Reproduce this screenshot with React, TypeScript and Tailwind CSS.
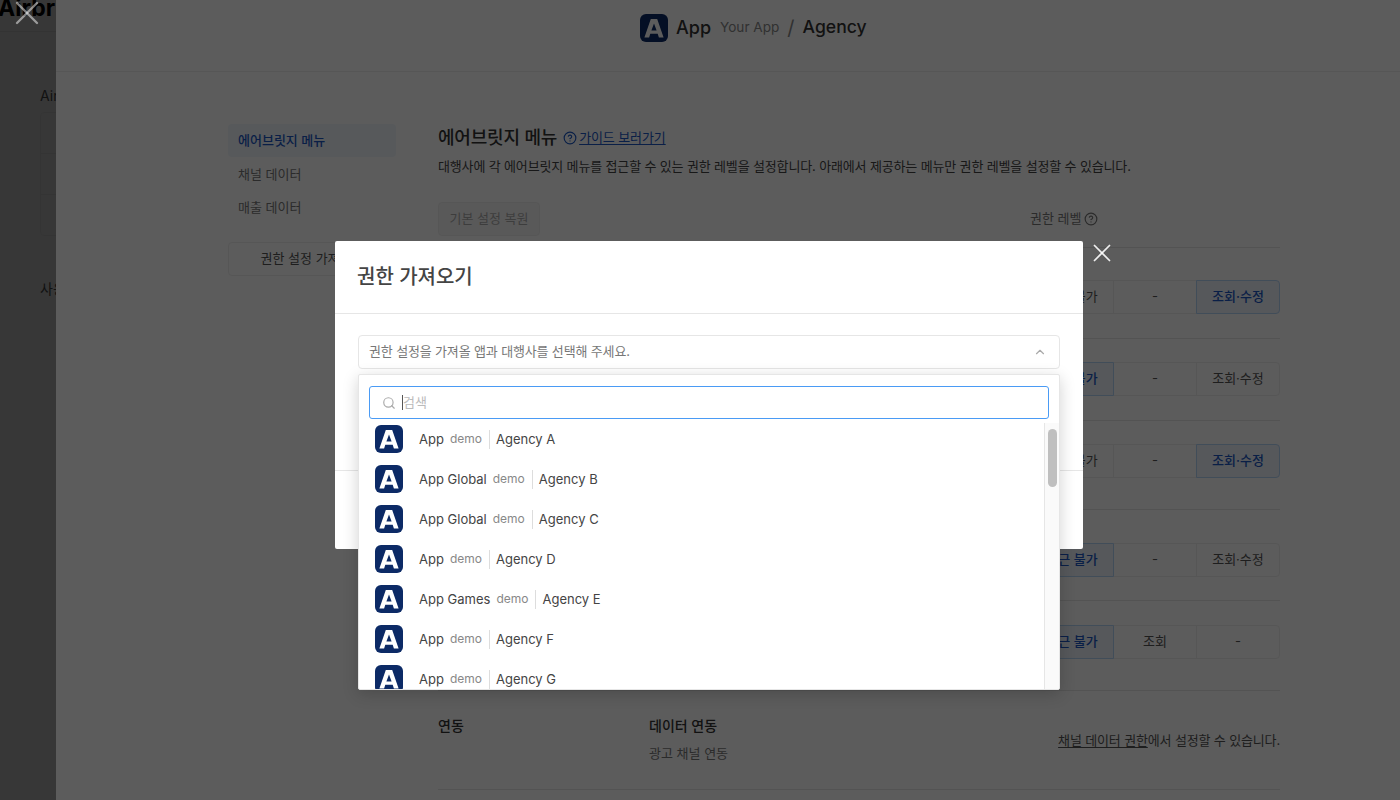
import { ChevronUp, CircleHelp, Search, X } from "lucide-react";

const apps = [
  { app: "App", agency: "Agency A" },
  { app: "App Global", agency: "Agency B" },
  { app: "App Global", agency: "Agency C" },
  { app: "App", agency: "Agency D" },
  { app: "App Games", agency: "Agency E" },
  { app: "App", agency: "Agency F" },
  { app: "App", agency: "Agency G" },
];

const rows = [
  { height: "h-[91px]", pad: "pt-[32px]", labels: ["접근 불가", "-", "조회·수정"], active: 2 },
  { height: "h-[82px]", pad: "pt-[23px]", labels: ["접근 불가", "-", "조회·수정"], active: 0 },
  { height: "h-[89px]", pad: "pt-[23px]", labels: ["접근 불가", "-", "조회·수정"], active: 2 },
  { height: "h-[91px]", pad: "pt-[33px]", labels: ["접근 불가", "-", "조회·수정"], active: 0 },
  { height: "h-[90px]", pad: "pt-[24px]", labels: ["접근 불가", "조회", "-"], active: 0 },
];

function AppLogo({ size = 28 }: { size?: number }) {
  return (
    <svg width={size} height={size} viewBox="0 0 28 28" className="shrink-0">
      <rect width="28" height="28" rx="6" fill="#0c2a66" />
      <path
        fillRule="evenodd"
        fill="#fff"
        d="M10.8 5h6.4L23.6 23.4h-4.7l-1.2-3.6h-7.4l-1.2 3.6H4.4zM14 9.6l-2.6 7h5.2z"
      />
    </svg>
  );
}

function Segments({ labels, active }: { labels: string[]; active: number }) {
  return (
    <div className="flex w-[250px] h-[34px] text-[13px]">
      {labels.map((label, i) => (
        <div
          key={i}
          className={`flex-1 flex items-center justify-center border -ml-px first:ml-0 first:rounded-l-[4px] last:rounded-r-[4px] ${
            i === active
              ? "relative bg-[#edf4fc] border-[#b4d4f7] text-[#1c58c4] font-medium"
              : "border-[#eeeeee] text-[#555]"
          }`}
        >
          {label}
        </div>
      ))}
    </div>
  );
}

export default function App() {
  return (
    <div className="relative w-[1400px] h-[800px] overflow-hidden bg-white text-[14px] text-[#333] font-[Inter,'Noto_Sans_CJK_KR',sans-serif]">
      {/* page behind the drawer */}
      <div className="h-[32px] border-b border-[#eeeeee] overflow-hidden">
        <div className="-ml-[2px] -mt-[9px] text-[23px] font-bold text-black whitespace-nowrap">
          Airbridge
        </div>
      </div>
      <div className="pl-[40px] pt-[53px]">
        <div className="h-[27px] whitespace-nowrap text-[#555]">Airbridge 메뉴</div>
        <div className="w-[400px] border border-[#f2f2f2] rounded">
          <div className="h-[41px] border-b border-[#f2f2f2]" />
          <div className="h-[41px] border-b border-[#f2f2f2]" />
          <div className="h-[40px]" />
        </div>
        <div className="mt-[42px] whitespace-nowrap text-[#555]">사용자</div>
      </div>

      <div className="absolute inset-0 bg-black/40" />

      {/* drawer */}
      <div className="absolute left-[56px] top-0 right-0 bottom-0 bg-white">
        <header className="h-[72px] border-b border-[#eeeeee] flex items-center pl-[584px] pb-[16px]">
          <AppLogo />
          <span className="ml-2 text-[18px] font-medium text-[#333]">App</span>
          <span className="ml-[9px] text-[13.6px] text-[#888]">Your App</span>
          <span className="ml-[8px] text-[20px] text-[#888]">/</span>
          <span className="ml-[8px] text-[17.6px] font-medium text-[#333]">Agency</span>
        </header>

        <div className="flex pl-[172px] pt-[52px]">
          <nav className="w-[168px]">
            <div className="h-[33px] pl-[10px] flex items-center rounded bg-[#f0f6fc] text-[13px] font-medium text-[#1c58c4]">
              에어브릿지 메뉴
            </div>
            <div className="h-[34px] pl-[10px] pt-[1px] flex items-center text-[13px] text-[#777]">
              채널 데이터
            </div>
            <div className="h-[33px] pl-[10px] pt-[1px] flex items-center text-[13px] text-[#777]">
              매출 데이터
            </div>
            <div className="mt-[18px] h-[34px] flex items-center justify-center border border-[#eeeeee] rounded text-[13px] text-[#555]">
              권한 설정 가져오기
            </div>
          </nav>

          <main className="ml-[42px] w-[842px]">
            <div className="flex items-center h-[26px]">
              <h2 className="text-[18px] tracking-[-0.2px] font-medium text-[#333]">에어브릿지 메뉴</h2>
              <CircleHelp size={14} className="ml-[6px] mt-[1px] text-[#1c58c4]" />
              <a className="ml-[2px] mt-[2px] text-[13px] tracking-[-0.1px] text-[#1c58c4] underline underline-offset-2">
                가이드 보러가기
              </a>
            </div>
            <p className="mt-[6px] h-[20px] text-[13px] leading-[20px] tracking-[-0.15px] text-[#444]">
              대행사에 각 에어브릿지 메뉴를 접근할 수 있는 권한 레벨을 설정합니다. 아래에서 제공하는 메뉴만 권한 레벨을 설정할 수 있습니다.
            </p>
            <div className="mt-[26px] flex items-center justify-between h-[34px]">
              <div className="w-[102px] h-[34px] flex items-center justify-center rounded bg-[#f7f7f7] border border-[#eeeeee] text-[13px] text-[#aaa]">
                기본 설정 복원
              </div>
              <div className="w-[250px] flex items-center gap-[2px] text-[13px] text-[#777]">
                권한 레벨
                <CircleHelp size={14} />
              </div>
            </div>
            <div className="mt-[11px]">
              {rows.map((row, i) => (
                <div
                  key={i}
                  className={`${row.height} ${row.pad} border-t border-[#e6e6e6] flex justify-end`}
                >
                  <Segments labels={row.labels} active={row.active} />
                </div>
              ))}
              <div className="h-[100px] border-t border-b border-[#e6e6e6] flex pt-[24px]">
                <div className="w-[211px] font-medium text-[#333]">연동</div>
                <div>
                  <div className="font-medium text-[#333]">데이터 연동</div>
                  <div className="mt-[8px] text-[13px] text-[#777]">광고 채널 연동</div>
                </div>
                <div className="ml-auto mt-[16px] text-[13px] tracking-[-0.15px] text-[#555]">
                  <span className="underline underline-offset-2">채널 데이터 권한</span>
                  에서 설정할 수 있습니다.
                </div>
              </div>
            </div>
          </main>
        </div>
      </div>

      <div className="absolute inset-0 bg-black/64" />

      <X
        size={40}
        strokeWidth={1.4}
        className="absolute left-[7px] -top-[7px] text-white/50"
      />

      {/* modal */}
      <div className="absolute left-[335px] top-[241px] w-[748px] h-[308px] bg-white rounded-[2px]">
        <div className="h-[73px] border-b border-[#e6e6e6] pl-[22px] flex items-center">
          <h3 className="text-[20px] font-medium text-[#444]">권한 가져오기</h3>
        </div>
        <div className="h-[157px] border-b border-[#e6e6e6] pt-[21px] px-[23px] -mb-px">
          <div className="h-[34px] border border-[#e6e6e6] rounded flex items-center justify-between pl-[10px] pr-[12px] text-[13px] tracking-[-0.15px] text-[#777]">
            권한 설정을 가져올 앱과 대행사를 선택해 주세요.
            <ChevronUp size={14} className="text-[#aaa]" />
          </div>
        </div>

        {/* dropdown over the modal */}
        <div className="absolute left-[23px] top-[133px] w-[702px] h-[316px] bg-white border border-[#e6e6e6] rounded-[2px] shadow-[0_4px_16px_rgba(0,0,0,0.18)] z-10 flex flex-col">
          <div className="px-[10px] pt-[11px]">
            <div className="h-[33px] border border-[#4a9bf5] rounded-[3px] flex items-center pl-[12px] text-[13px] text-[#bbb]">
              <Search size={14} className="text-[#aaa]" />
              <span className="ml-[6px] w-px h-[15px] bg-[#555]" />
              <span>검색</span>
            </div>
          </div>
          <div className="flex-1 min-h-0 flex">
            <ul className="flex-1 overflow-hidden">
              {apps.map((item) => (
                <li
                  key={item.agency}
                  className="h-[40px] shrink-0 flex items-center pl-[16px] text-[13px] text-[#444]"
                >
                  <AppLogo />
                  <span className="ml-[16px] mt-[2px]">{item.app}</span>
                  <span className="ml-[6px] text-[12px] text-[#888]">demo</span>
                  <span className="ml-[7px] w-px h-[19px] bg-[#ddd]" />
                  <span className="ml-[6px] mt-[2px]">{item.agency}</span>
                </li>
              ))}
            </ul>
            <div className="w-[15px] mt-[4px] border-l border-[#e6e6e6] bg-[#fafafa] pt-[6px] pl-[3px]">
              <div className="w-[9px] h-[58px] rounded-full bg-[#bfbfbf]" />
            </div>
          </div>
        </div>
      </div>

      <X
        size={30}
        strokeWidth={1.4}
        className="absolute left-[1087px] top-[238px] text-white/90"
      />
    </div>
  );
}
